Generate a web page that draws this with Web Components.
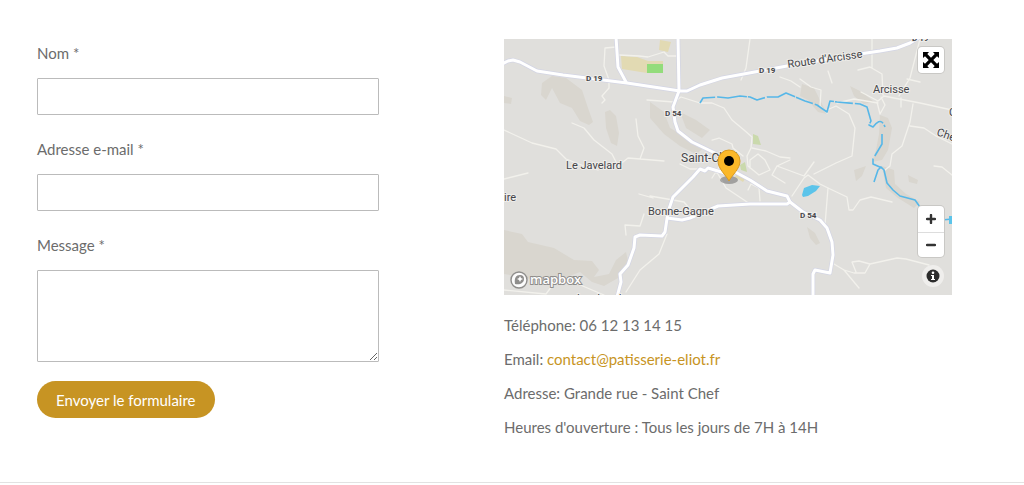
<!DOCTYPE html>
<html lang="fr">
<head>
<meta charset="utf-8">
<meta name="viewport" content="width=device-width, initial-scale=1">
<title>Contact</title>
<style>
body { margin: 0; background: #fff; color: #6c6c6c; font: 15px/24px Lato, "Liberation Sans", sans-serif; }
</style>
</head>
<body>
<contact-page>
  <contact-form slot="form">
    <form-field label="Nom *" name="nom" type="text"></form-field>
    <form-field label="Adresse e-mail *" name="email" type="email"></form-field>
    <form-field label="Message *" name="message" type="textarea"></form-field>
  </contact-form>
  <location-map slot="info"></location-map>
  <contact-details slot="info"></contact-details>
</contact-page>

<template id="page-tpl">
  <style>
    :host { display: block; border-bottom: 1px solid #e2e2e2; }
    main { display: grid; grid-template-columns: 1fr 1fr; column-gap: 19px; padding: 39px 72px 43px 37px; }
    .form { padding-right: 106px; }
    .info { display: flex; flex-direction: column; gap: 18px; min-width: 0; }
  </style>
  <main>
    <div class="form"><slot name="form"></slot></div>
    <div class="info"><slot name="info"></slot></div>
  </main>
</template>

<template id="form-tpl">
  <style>
    :host { display: block; }
    form { display: flex; flex-direction: column; align-items: stretch; }
    .fields { display: flex; flex-direction: column; gap: 20px; margin-bottom: 19px; }
    button { align-self: flex-start; height: 37px; padding: 0 19px; border: 0; border-radius: 19px; background: #c79423; color: #fff; font: inherit; cursor: pointer; }
  </style>
  <form>
    <div class="fields"><slot></slot></div>
    <button type="button">Envoyer le formulaire</button>
  </form>
</template>

<template id="details-tpl">
  <style>
    :host { display: flex; flex-direction: column; gap: 10px; }
    p { margin: 0; }
    a { color: #c79423; text-decoration: none; }
  </style>
  <p>Téléphone: 06 12 13 14 15</p>
  <p>Email: <a href="mailto:contact@patisserie-eliot.fr">contact@patisserie-eliot.fr</a></p>
  <p>Adresse: Grande rue - Saint Chef</p>
  <p>Heures d'ouverture : Tous les jours de 7H à 14H</p>
</template>

<template id="map-tpl">
  <style>
    :host { display: block; position: relative; overflow: hidden; height: 256px; background: #e0dfdc; }
    .map { display: block; width: 100%; height: 100%; }
    .map text { font-family: Roboto, "Liberation Sans", sans-serif; font-size: 11px; fill: #454549; stroke: #eeedea; stroke-width: 2px; paint-order: stroke; }
    .map .ref { font-size: 8px; font-weight: 700; }
    .map .town { font-size: 12px; }
    .map .brand { font: 600 13px "Open Sans", sans-serif; fill: #fff; stroke: #8f8e8c; }
    .top, .bottom { position: absolute; right: 8px; display: flex; flex-direction: column; align-items: flex-end; }
    .top { top: 8px; }
    .bottom { bottom: 8px; gap: 8px; }
    .group { display: flex; flex-direction: column; width: 26px; background: #fff; border-radius: 4px; box-shadow: 0 0 0 1px #c9c8c5; }
    button { display: flex; align-items: center; justify-content: center; padding: 0; border: 0; width: 26px; height: 26px; background: none; cursor: pointer; }
    button + button { height: 25px; border-top: 1px solid #ddd; }
    .info { width: 22px; height: 22px; border-radius: 11px; background: #efeeec; }
  </style>
  <svg class="map" viewBox="0 1 448 256" preserveAspectRatio="xMidYMid slice" role="img" aria-label="Carte de Saint-Chef">
    <g fill="#d9d6cf">
      <path d="M38 45L48 38L62 40L78 52L84 70L89 84L85 87L76 83L68 70L56 65L48 50L42 62L37 57ZM0 58L8 60L7 66L0 65ZM101 74L106 72L112 78L115 95L113 108L107 105L102 90Z"/>
      <path d="M146 64L160 74L166 90L180 98L200 110L192 116L176 108L160 96L146 80ZM176 74L192 82L206 92L198 100L182 90Z"/>
      <path d="M0 192L18 196L24 204L50 210L70 222L88 223L95 232L90 239L105 236L112 222L122 214L124 223L114 240L100 248L88 244L76 234L60 240L40 244L22 240L0 236Z"/>
      <path d="M298 46L310 50L317 64L323 76L314 74L304 62L296 58ZM346 48L358 54L370 64L360 66L350 58ZM376 77L384 80L388 90L384 112L378 122L368 124L372 112L375 96ZM350 132L362 128L358 138L352 143ZM378 128L390 132L391 146L402 156L416 164L410 170L394 160L382 150ZM404 137L414 142L413 146L405 144ZM303 189L311 195L316 205L312 207L306 200Z"/>
    </g>
    <g fill="#e2dab3">
      <path d="M117 18L133 19L144 23L159 23V35H143L118 31Z"/><path d="M156 2L167 4L164 14L155 12Z"/><path d="M233 136L241 141L239 144L231 139Z"/>
    </g>
    <path d="M143 26H159V35H143Z" fill="#93dc7b"/>
    <path d="M249 96L254 98L257 107L249 106ZM236 127L241 124L243 134L237 132Z" fill="#cad9ac"/>
    <g fill="none" stroke="#f2f1ec" stroke-width="1.3" stroke-linejoin="round" stroke-linecap="round">
      <path d="M112 9L101 10L100 28L105 42L105 50L98 58L101 62L98 65M115 17L135 18L144 19L160 14L164 18L174 18"/>
      <path d="M0 92L28 105L52 111L62 121L80 128L94 132M68 85L80 90L90 102L108 116L114 128L124 120L160 123M132 81L134 98L140 110L136 121M0 141L24 135"/>
      <path d="M246 1L242 30L237 42M143 62L170 64L177 59L196 65H208L220 70L228 82L240 92L248 99L247 110L243 118L244 128L255 137L266 132L261 122L254 116L246 122V130"/>
      <path d="M208 102L215 100L228 106L229 110L239 118M248 110L262 113L276 119L286 120M176 126L186 131L208 131L214 136L222 150L246 166M217 126L208 140M256 163L255 150L247 146L244 152M286 122L273 128L268 137L281 145M273 128L300 138L310 124"/>
      <path d="M146 158L169 162L180 164L185 170M135 156L149 160M163 196L155 216L136 232L122 254M140 176L136 188L121 187L122 197M288 158L300 140L304 137L316 146L324 150L343 159L345 172L349 172L356 162L367 159L388 164M324 150L321 187"/>
      <path d="M368 1V30M354 32L366 29L378 36L379 57M416 1L406 40L395 58M403 41L416 44M357 54L374 63L380 58L390 60L416 65L448 72M373 64L376 76L381 67L377 59M397 60V69M409 66L406 84L398 108L388 116L386 128L381 132M406 88L420 90L432 98L448 106"/>
      <path d="M323 72L332 68L345 76L351 90L348 118L332 125L310 136M333 65L350 61L374 65M323 75L316 68L317 52L307 49L296 41M324 33L328 45M276 39L287 43L296 49M430 128L438 129L448 137"/>
      <path d="M330 226L340 232L355 250M340 232L350 235L361 235L366 226L393 220L402 221L425 227M352 234L348 224L355 223L366 226M0 252L42 256L54 240L74 246L100 257"/>
    </g>
    <g fill="none" stroke="#d3d5e4" stroke-width="4.4" stroke-linejoin="round" stroke-linecap="round">
      <path d="M-2 26L4 23L9 22L16 24L33 33L59 37L83 40L123 45L176 53H183L196 47L218 40L256 33L283 28L349 17L376 13L393 10L406 5L416 -1"/>
      <path d="M112 -1L114 29L122 44M174 -1L175 53L169 69L171 84L174 93L188 104L213 116L224 126L233 135L246 142L263 153L283 158L286 164L299 174L316 182L323 190L328 204L329 217L326 235L311 232L309 236V259"/>
      <path d="M286 164L283 166H246L214 168L186 180L178 182L163 180M224 136L204 130L201 133L196 131L189 139L169 159L164 174L161 194L158 198L136 197L131 199L130 210L124 227L116 236L117 244L113 259"/>
    </g>
    <g fill="none" stroke="#fff" stroke-width="3" stroke-linejoin="round" stroke-linecap="round">
      <path d="M-2 26L4 23L9 22L16 24L33 33L59 37L83 40L123 45L176 53H183L196 47L218 40L256 33L283 28L349 17L376 13L393 10L406 5L416 -1"/>
      <path d="M112 -1L114 29L122 44M174 -1L175 53L169 69L171 84L174 93L188 104L213 116L224 126L233 135L246 142L263 153L283 158L286 164L299 174L316 182L323 190L328 204L329 217L326 235L311 232L309 236V259"/>
      <path d="M286 164L283 166H246L214 168L186 180L178 182L163 180M224 136L204 130L201 133L196 131L189 139L169 159L164 174L161 194L158 198L136 197L131 199L130 210L124 227L116 236L117 244L113 259"/>
    </g>
    <g fill="none" stroke="#56b7e8" stroke-width="1.6" stroke-linejoin="round">
      <path stroke-dasharray="18 2 30 1" d="M196 65L199 60L214 59L224 60L236 58L246 59L253 62L263 59H274L282 55L301 63L313 67L323 74L326 63L333 64L356 66L363 69L367 83L365 87L369 89Q377 78 381 89"/>
      <path stroke-dasharray="24 3" d="M378 96V106L369 121L369 126L378 130"/>
      <path d="M370 144L374 132L377 129L380 132L383 145L389 152L396 158L411 162L416 169M438 182L448 181"/>
    </g>
    <path d="M298 157L300 150L308 147L316 148L312 153L304 158L299 159ZM445 178H448V186H445Z" fill="#5cc4ea"/>
    <g>
      <text class="ref" x="82" y="43">D 19</text>
      <text class="ref" x="255" y="35">D 19</text>
      <text class="ref" x="161" y="78">D 54</text>
      <text class="ref" x="296" y="180">D 54</text>
      <text class="ref" x="408" y="3">D 19</text>
      <text x="62" y="131">Le Javelard</text>
      <text x="369" y="55">Arcisse</text>
      <text x="144" y="177">Bonne-Gagne</text>
      <text x="0" y="163">ire</text>
      <text x="284" y="30" transform="rotate(-8 284 30)">Route d’Arcisse</text>
      <text x="432" y="97" transform="rotate(20 432 97)">Che</text>
      <text x="445" y="78">C</text>
      <text x="73" y="264">Les Landes</text>
      <text class="town" x="177" y="124">Saint-Chef</text>
    </g>
    <ellipse cx="225" cy="142" rx="9" ry="4" fill="#555" opacity=".45"/>
    <path d="M225 143C222 137 214 131 214 123A11 11 0 0 1 236 123C236 131 228 137 225 143Z" fill="#fbb829" stroke="#d99a20" stroke-width="1"/>
    <circle cx="225" cy="123" r="5" fill="#000"/>
    <circle cx="15" cy="242" r="8" fill="#fff" fill-opacity=".9" stroke="#8f8e8c" stroke-width="1.4"/>
    <path d="M11 246C10 240 12 237 16 237A4 4 0 0 1 20 241C20 245 16 247 11 246Z" fill="#8f8e8c"/>
    <path d="M16 238L17 240L19 241L17 242L16 244L15 242L13 241L15 240Z" fill="#fff"/>
    <text class="brand" x="26" y="246">mapbox</text>
  </svg>
  <div class="top">
    <div class="group">
      <button type="button" aria-label="Plein écran"><svg width="16" height="16" viewBox="0 0 16 16"><path d="M0 0H6L4.300 2L8 5.700L11.700 2L10 0H16V6L14 4.300L10.300 8L14 11.700L16 10V16H10L11.700 14L8 10.300L4.300 14L6 16H0V10L2 11.700L5.700 8L2 4.300L0 6Z"/></svg></button>
    </div>
  </div>
  <div class="bottom">
    <div class="group">
      <button type="button" aria-label="Zoom avant"><svg width="10" height="10" viewBox="0 0 10 10"><path d="M5 1V9M1 5H9" stroke="#333" stroke-width="2.400" stroke-linecap="round"/></svg></button>
      <button type="button" aria-label="Zoom arrière"><svg width="10" height="10" viewBox="0 0 10 10"><path d="M1 5H9" stroke="#333" stroke-width="2.400" stroke-linecap="round"/></svg></button>
    </div>
    <button class="info" type="button" aria-label="Attribution"><svg width="14" height="14" viewBox="0 0 14 14"><circle cx="7" cy="7" r="6.500" fill="#2c2c2c"/><circle cx="7" cy="3.800" r="1.300" fill="#fff"/><path d="M5 6H8V10H9V11H5V10H6V7H5Z" fill="#fff"/></svg></button>
  </div>
</template>

<script>
const define = (tag, id) => customElements.define(tag, class extends HTMLElement {
  constructor() {
    super();
    this.attachShadow({ mode: "open" }).append(document.getElementById(id).content.cloneNode(true));
  }
});

class FormField extends HTMLElement {
  connectedCallback() {
    if (this.shadowRoot) return;
    const root = this.attachShadow({ mode: "open" });
    const type = this.getAttribute("type");
    const name = this.getAttribute("name");
    root.innerHTML = `
      <style>
        :host { display: flex; flex-direction: column; gap: 11px; }
        label { line-height: 28px; }
        input, textarea { display: block; box-sizing: border-box; width: 100%; height: 37px; margin: 0; padding: 8px; border: 1px solid #bbb; border-radius: 1px; background: #fff; color: inherit; font: inherit; }
        textarea { height: 92px; resize: vertical; }
      </style>
      <label for="control"></label>
      ${type === "textarea"
        ? `<textarea id="control" name="${name}" required></textarea>`
        : `<input id="control" name="${name}" type="${type}" required>`}`;
    root.querySelector("label").textContent = this.getAttribute("label");
  }
}

define("contact-page", "page-tpl");
define("contact-form", "form-tpl");
define("contact-details", "details-tpl");
define("location-map", "map-tpl");
customElements.define("form-field", FormField);
</script>
</body>
</html>
